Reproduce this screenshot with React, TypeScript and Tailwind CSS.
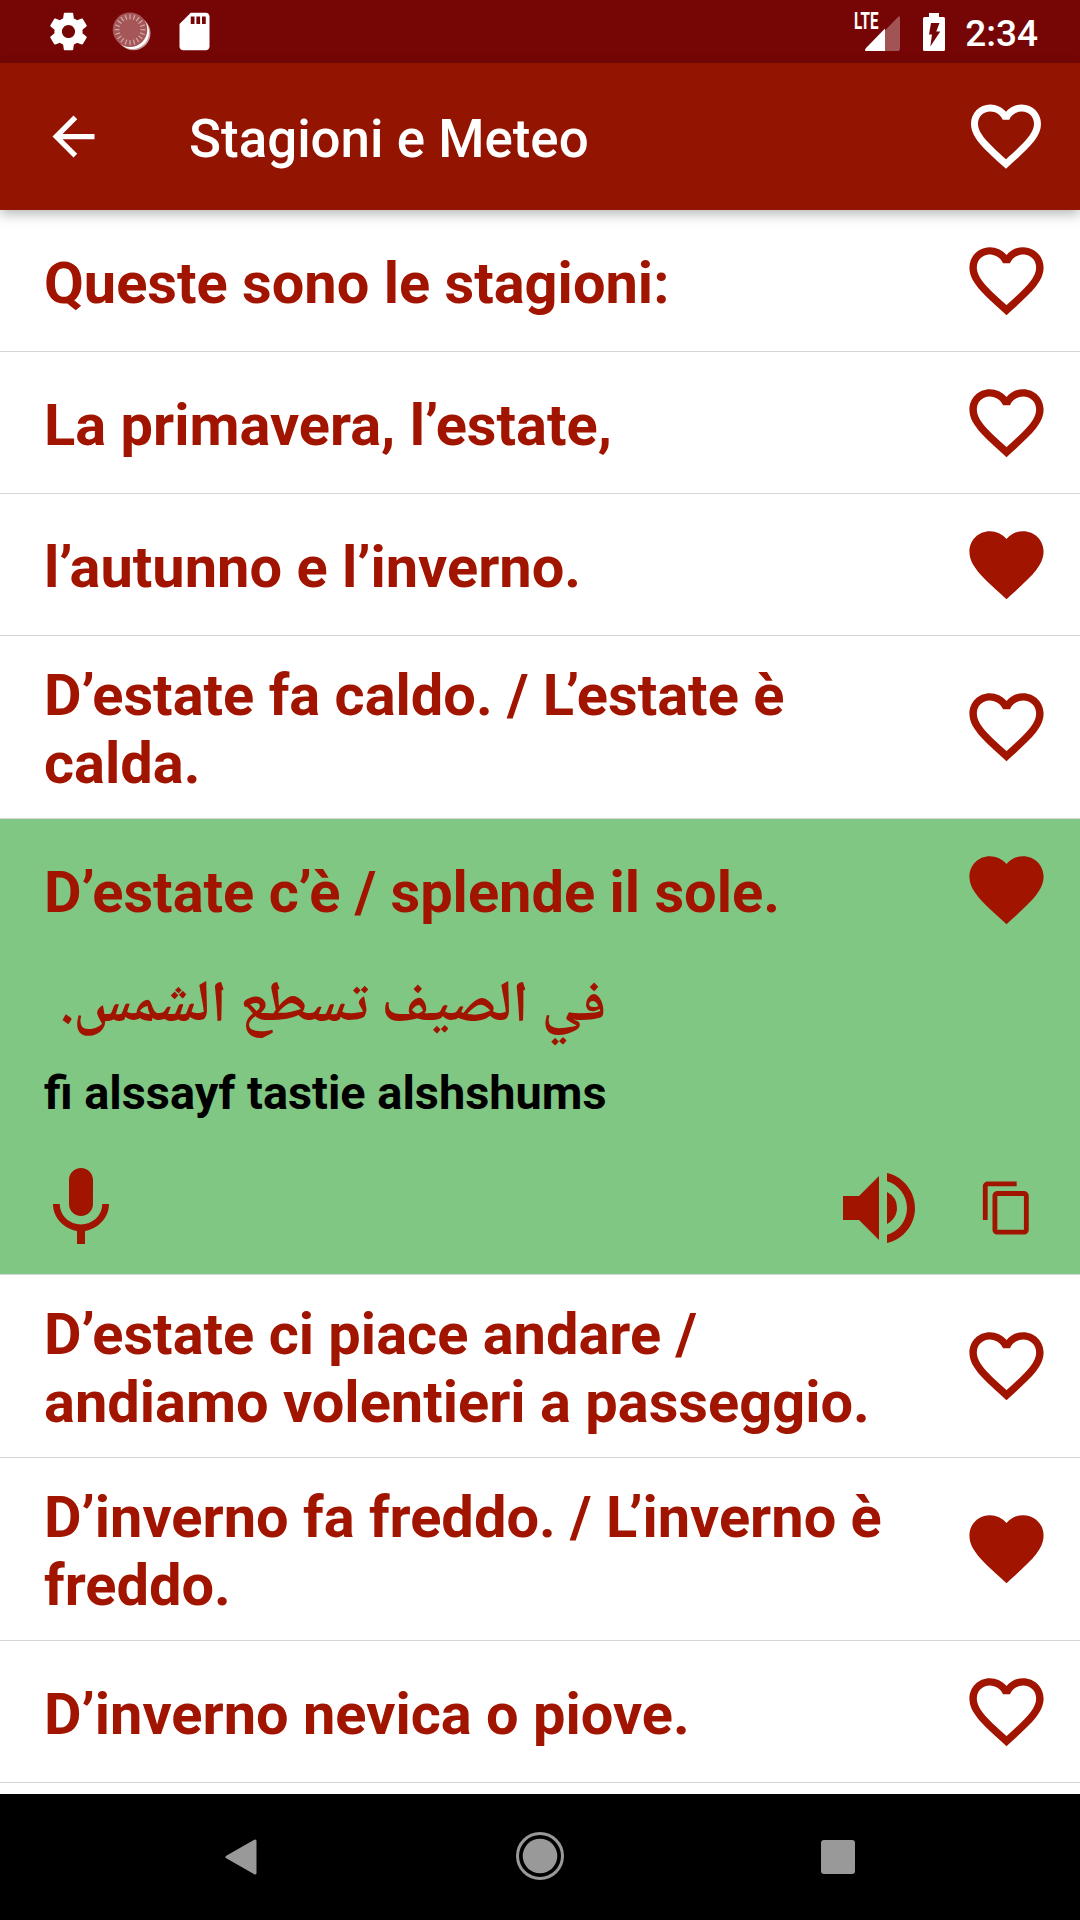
import React from "react";
import {
  MdArrowBack,
  MdContentCopy,
  MdFavorite,
  MdFavoriteBorder,
  MdMic,
  MdSdCard,
  MdVolumeUp,
} from "react-icons/md";

type Phrase = {
  lines: string[];
  liked: boolean;
  arabic?: string;
  translit?: string;
};

const phrases: Phrase[] = [
  { lines: ["Queste sono le stagioni:"], liked: false },
  { lines: ["La primavera, l’estate,"], liked: false },
  { lines: ["l’autunno e l’inverno."], liked: true },
  { lines: ["D’estate fa caldo. / L’estate è", "calda."], liked: false },
  {
    lines: ["D’estate c’è / splende il sole."],
    liked: true,
    arabic: "في الصيف تسطع الشمس.",
    translit: "fi alssayf tastie alshshums",
  },
  {
    lines: ["D’estate ci piace andare /", "andiamo volentieri a passeggio."],
    liked: false,
  },
  { lines: ["D’inverno fa freddo. / L’inverno è", "freddo."], liked: true },
  { lines: ["D’inverno nevica o piove."], liked: false },
];

const ticks = Array.from({ length: 20 }, (_, i) => i * 18);

function GearIcon() {
  return (
    <svg width="45" height="45" viewBox="0 0 24 24" fill="currentColor">
      <path d="M19.43 12.98c.04-.32.07-.64.07-.98s-.03-.66-.07-.98l2.110-1.650c.19-.15.24-.42.12-.64l-2-3.460c-.12-.22-.39-.3-.61-.22l-2.490 1c-.52-.4-1.080-.73-1.690-.98l-.38-2.650C14.460 2.180 14.250 2 14 2h-4c-.25 0-.46.18-.49.42l-.38 2.650c-.61.25-1.170.59-1.690.98l-2.490-1c-.23-.09-.49 0-.61.22l-2 3.460c-.13.22-.07.49.12.64l2.110 1.650c-.04.32-.07.65-.07.98s.03.66.07.98l-2.110 1.650c-.19.15-.24.42-.12.64l2 3.460c.12.22.39.3.61.22l2.490-1c.52.4 1.080.73 1.690.98l.38 2.650c.03.24.24.42.49.42h4c.25 0 .46-.18.49-.42l.38-2.650c.61-.25 1.170-.59 1.690-.98l2.490 1c.23.09.49 0 .61-.22l2-3.460c.12-.22.07-.49-.12-.64l-2.110-1.650zM12 15.500c-1.930 0-3.500-1.570-3.500-3.500s1.570-3.500 3.500-3.500 3.500 1.570 3.500 3.500-1.570 3.500-3.500 3.500z" />
    </svg>
  );
}

function SyncIcon() {
  return (
    <svg width="40" height="40" viewBox="0 0 40 40">
      <circle cx="21.5" cy="21.3" r="17" fill="#fff" opacity="0.6" />
      <circle cx="20.5" cy="20.3" r="16.6" fill="#fff" />
      <circle cx="18" cy="17.7" r="17.3" fill="#a55757" />
      {ticks.map((deg) => (
        <path
          key={deg}
          d="M18 2.2v5"
          stroke="#d3a9a9"
          strokeWidth="1.2"
          transform={`rotate(${deg} 18 17.7)`}
        />
      ))}
    </svg>
  );
}

function StatusBar() {
  return (
    <div className="h-[63px] shrink-0 bg-[#760606] text-white flex items-center justify-between pl-[46px] pr-[42px]">
      <div className="flex items-center">
        <GearIcon />
        <div className="ml-[21px]">
          <SyncIcon />
        </div>
        <MdSdCard size={45} className="ml-[20px]" />
      </div>
      <div className="flex items-center">
        <div className="relative w-[47px] h-[38px]">
          <svg width="47" height="38" viewBox="0 0 47 38">
            <path d="M12 37 44 4Q46 2 46 5V35Q46 38 44 38H12Q10 38 12 36z" fill="#a25354" />
            <path d="M31 15.5V38H12Q10 37.500 12 35z" fill="#fff" />
          </svg>
          <span className="absolute left-0 -top-px text-[23px] leading-[20px] font-bold origin-left scale-x-[0.66]">
            LTE
          </span>
        </div>
        <svg width="22" height="38" viewBox="0 0 22 38" className="ml-[22px]">
          <path d="M6 0h10v4h4.500Q22 4 22 5.500V36.500Q22 38 20.500 38h-19Q0 38 0 36.500V5.500Q0 4 1.500 4H6z" fill="#fff" />
          <path d="M8 10h8.500L13.300 18.600h4L7.300 33.600 9 21.600H6z" fill="#760606" />
        </svg>
        <span className="ml-[20px] mt-[3px] text-[37px] leading-none font-medium">
          2:34
        </span>
      </div>
    </div>
  );
}

function Header() {
  return (
    <div className="h-[147px] shrink-0 relative z-10 bg-[#931400] text-white flex items-center pl-[42px] pr-[32px] shadow-[0_4px_12px_rgba(0,0,0,0.29)]">
      <MdArrowBack size={63} />
      <h1 className="ml-[84px] mt-[6px] flex-1 text-[52.9px] font-medium">
        Stagioni e Meteo
      </h1>
      <MdFavoriteBorder size={84} className="-mt-[2px]" />
    </div>
  );
}

// tightens the pairs around the apostrophe: L’ and ’a
function PhraseLine({ text }: { text: string }) {
  return (
    <span className="block whitespace-nowrap">
      {text.split(/(L(?=’)|’(?=a))/).map((part, i) => {
        if (part === "L")
          return (
            <span key={i} className="tracking-[-8px]">
              {part}
            </span>
          );
        if (part === "’")
          return (
            <span key={i} className="tracking-[-3px]">
              {part}
            </span>
          );
        return part;
      })}
    </span>
  );
}

function PhraseRow({ phrase }: { phrase: Phrase }) {
  const Heart = phrase.liked ? MdFavorite : MdFavoriteBorder;

  return (
    <div
      className={
        phrase.arabic
          ? "h-[456px] shrink-0 border-b border-[#d6d6d6] bg-[#81c784]"
          : "shrink-0 border-b border-[#d6d6d6] bg-white"
      }
    >
      <div className="flex items-center min-h-[141px] pt-[25px] pb-[21px] pl-[44px] pr-[29px]">
        <p className="flex-1 text-[57.75px] leading-[68px] font-bold">
          {phrase.lines.map((line) => (
            <PhraseLine key={line} text={line} />
          ))}
        </p>
        <Heart size={89} className="shrink-0 -mt-[5px]" />
      </div>
      {phrase.arabic && (
        <div className="flex flex-col items-start pl-[44px]">
          <p
            dir="rtl"
            lang="ar"
            className="ml-[15px] mt-[4px] h-[90px] text-[58px] leading-[90px] font-bold whitespace-nowrap font-['Noto_Naskh_Arabic','DejaVu_Sans',sans-serif]"
          >
            {phrase.arabic}
          </p>
          <p className="mt-[9px] text-[46.9px] leading-[60px] font-bold text-black">
            {phrase.translit}
          </p>
        </div>
      )}
      {phrase.arabic && (
        <div className="flex items-center pl-[33px] pr-[44px] mt-[37px]">
          <MdMic size={96} />
          <MdVolumeUp size={96} className="ml-auto" />
          <MdContentCopy size={58} className="ml-[51px]" />
        </div>
      )}
    </div>
  );
}

function NavBar() {
  return (
    <div className="h-[126px] shrink-0 relative z-10 bg-black flex items-center justify-between pl-[225px] pr-[225px]">
      <svg width="32" height="36" viewBox="0 0 32 36">
        <path d="M2 18 30 2v32z" fill="#999" stroke="#999" strokeWidth="3" strokeLinejoin="round" />
      </svg>
      <svg width="48" height="48" viewBox="0 0 48 48" className="-mt-[2px] ml-[1px]">
        <circle cx="24" cy="24" r="22.500" fill="none" stroke="#999" strokeWidth="3" />
        <circle cx="24" cy="24" r="17.300" fill="#999" />
      </svg>
      <div className="w-[34px] h-[34px] rounded-[3px] bg-[#999]" />
    </div>
  );
}

export default function App() {
  return (
    <div className="w-[1080px] h-[1920px] overflow-hidden flex flex-col bg-white font-[Roboto,sans-serif]">
      <StatusBar />
      <Header />
      <div className="flex-1 min-h-0 overflow-hidden flex flex-col text-[#a01400]">
        {phrases.map((phrase) => (
          <PhraseRow key={phrase.lines[0]} phrase={phrase} />
        ))}
      </div>
      <NavBar />
    </div>
  );
}
